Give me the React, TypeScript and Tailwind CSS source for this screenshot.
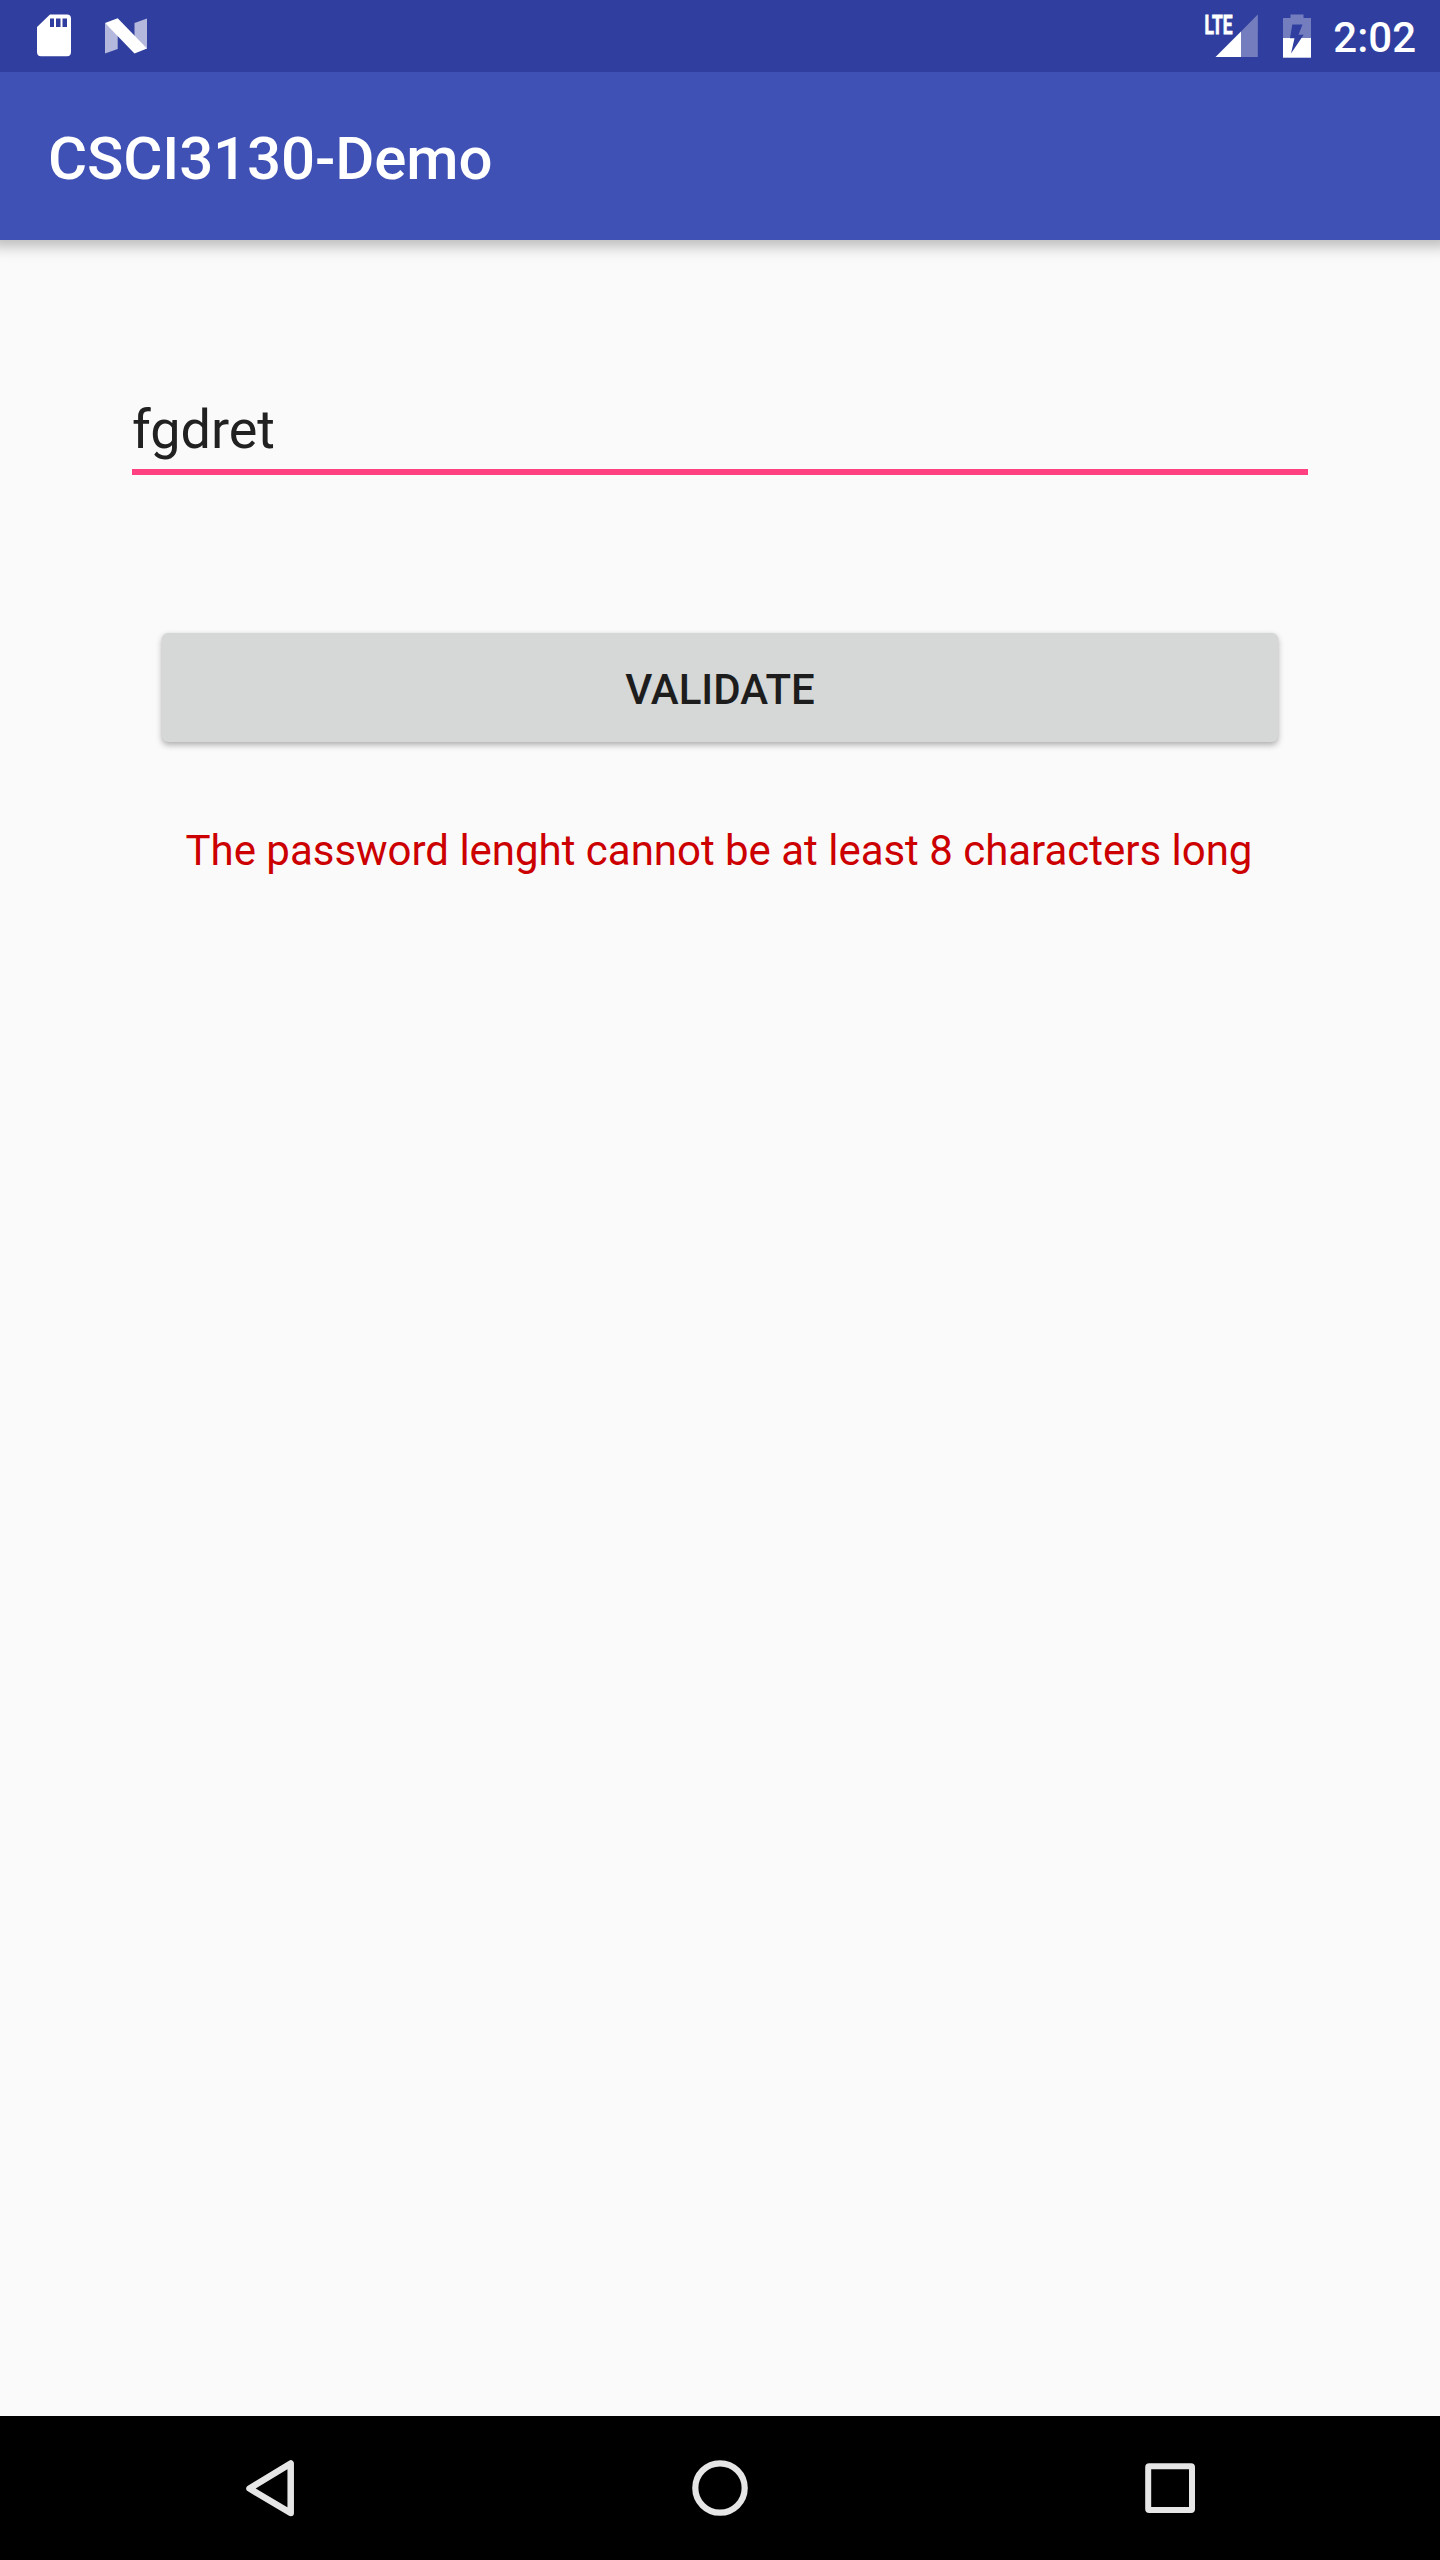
function SdCardIcon() {
  return (
    <svg width="34" height="43" viewBox="0 0 34 43" fill="none">
      <path
        fillRule="evenodd"
        fill="#fff"
        d="M13 .5H30Q34 .5 34 4.500V38Q34 42.200 30 42.200H4Q0 42.200 0 38V13ZM13 4.500V13H17V4.500ZM19 4.500V13H23.500V4.500ZM25.500 4.500V13H30V4.500Z"
      />
    </svg>
  );
}

function NougatIcon() {
  return (
    <svg width="42" height="36" viewBox="0 0 42 36">
      <path fill="#b4b8dd" d="M0 5 12.700 16V31L0 35.500ZM42 .5V31L29.500 20V5Z" />
      <path fill="#fff" d="M0 5 12.700 .3 42 30.500 29.500 35.500Z" />
    </svg>
  );
}

function SignalIcon() {
  return (
    <svg width="54" height="58" viewBox="-1 -14 54 58">
      <path fill="#fff" fillOpacity=".33" d="M52.800 .5V43H36V17.500Z" />
      <path fill="#fff" d="M36 17.500V43H10.500Z" />
      <text
        x="-.5"
        y="19.500"
        textLength="28"
        lengthAdjust="spacingAndGlyphs"
        fill="#fff"
        stroke="#fff"
        strokeWidth=".8"
        className="text-[26px] font-bold"
      >
        LTE
      </text>
    </svg>
  );
}

function BatteryIcon() {
  return (
    <svg width="28" height="44" viewBox="0 0 28 44">
      <path fill="#fff" fillOpacity=".33" d="M7.500 .5H20.500V4H28V24H0V4H7.500Z" />
      <path fill="#fff" d="M0 24H28V43.700H0Z" />
      <path fill="#303f9f" d="M9.300 10.500H19.500L15.500 20.800H20.700L8 39.500 11.500 24.300H7Z" />
    </svg>
  );
}

function StatusBar() {
  return (
    <div className="flex h-[72px] shrink-0 items-start bg-[#303f9f] pl-[37px] pr-6 text-white">
      <div className="pt-[14px]">
        <SdCardIcon />
      </div>
      <div className="ml-[34px] pt-[18px]">
        <NougatIcon />
      </div>
      <div className="ml-auto flex items-start">
        <SignalIcon />
        <div className="ml-[25px] pt-[14px]">
          <BatteryIcon />
        </div>
        <span className="ml-[22px] pt-[13px] text-[42px] font-medium leading-[49px]">2:02</span>
      </div>
    </div>
  );
}

function NavigationBar() {
  return (
    <nav className="flex h-[144px] shrink-0 items-center justify-between bg-black px-[240px]">
      <svg width="60" height="60" viewBox="0 0 60 60" fill="none" stroke="#e6e6e6" strokeWidth="6.500" strokeLinejoin="round">
        <path d="M9.500 30.500 50.700 5.500V55Z" />
      </svg>
      <svg width="60" height="60" viewBox="0 0 60 60" fill="none" stroke="#e6e6e6" strokeWidth="6.200">
        <circle cx="30" cy="30" r="24.700" />
      </svg>
      <svg width="60" height="60" viewBox="0 0 60 60" fill="none" stroke="#e6e6e6" strokeWidth="6">
        <rect x="8.200" y="8.200" width="43.800" height="43.800" rx="1" />
      </svg>
    </nav>
  );
}

export default function App() {
  return (
    <div className="flex h-[2560px] w-[1440px] flex-col overflow-hidden bg-[#fafafa] font-['Roboto',sans-serif]">
      <StatusBar />
      <header className="h-[168px] shrink-0 bg-[#3f51b5] px-12 pt-[51px] shadow-[0_-4px_14px_10px_rgba(0,0,0,0.27)] [clip-path:inset(0_0_-40px_0)]">
        <h1 className="text-[60px] font-medium leading-[71px] tracking-[-0.13px] text-white">CSCI3130-Demo</h1>
      </header>
      <main className="flex flex-1 flex-col px-[132px] pt-[158px]">
        <input
          type="text"
          defaultValue="fgdret"
          className="h-[77px] border-b-[6px] border-[#ff4081] pb-2 text-[54px] leading-[63px] text-[#212121] outline-none"
        />
        <button className="mx-[30px] mt-[158px] flex h-[109px] items-start justify-center rounded-[6px] bg-[#d6d8d7] pt-8 text-[42px] font-medium leading-[49px] text-[#1d1d1d] shadow-[0_3px_6px_rgba(0,0,0,0.3),0_0_2px_rgba(0,0,0,0.06)]">
          VALIDATE
        </button>
        <p className="mt-[84px] pr-[2px] text-center text-[42px] leading-[49px] tracking-[-0.02px] text-[#cc0000]">
          The password lenght cannot be at least 8 characters long
        </p>
      </main>
      <NavigationBar />
    </div>
  );
}
